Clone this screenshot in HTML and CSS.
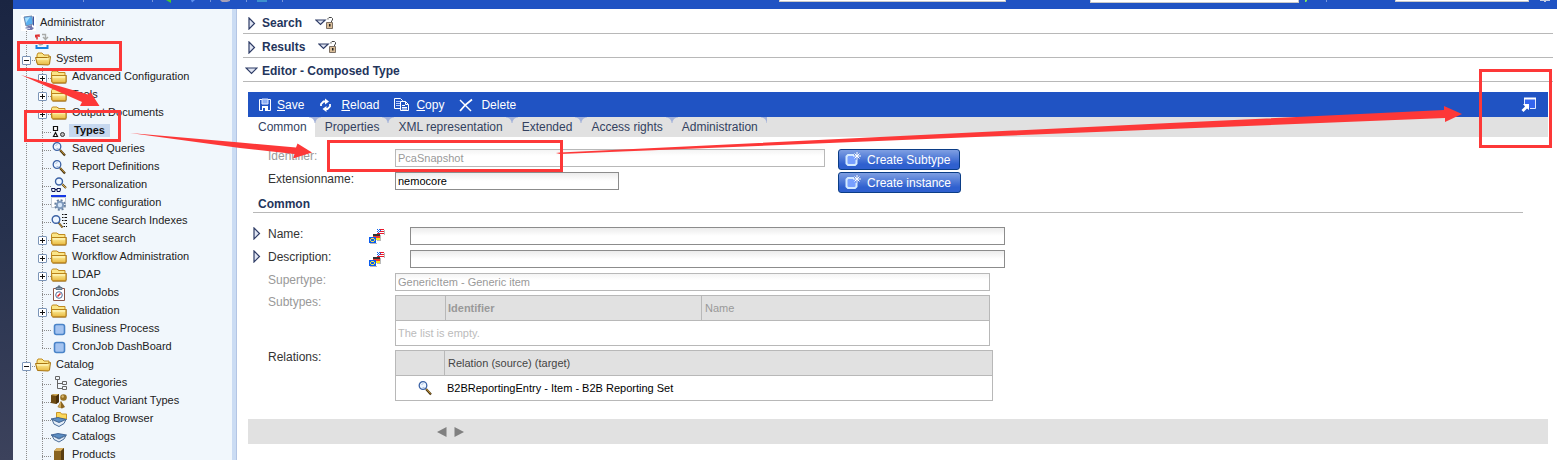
FILE: index.html
```html
<!DOCTYPE html>
<html lang="en">
<head>
<meta charset="utf-8">
<title>Editor - Composed Type</title>
<link rel="stylesheet" href="styles.css">
</head>
<body>
<svg class="defs" aria-hidden="true">
  <linearGradient id="gold" x1="0" y1="0" x2="0" y2="1"><stop offset="0" stop-color="#fff3a0"/><stop offset="1" stop-color="#e8b840"/></linearGradient>
  <symbol id="folder" viewBox="0 0 16 16">
    <path d="M1 13V4l1-2h5l2 2h5v2h2v7l-1 2H2z" fill="#8a5d10" opacity=".55"/>
    <path d="M.5 12.500V3.500l1-1.500h4.500l1.500 1.500h6.500v9.500z" fill="#fbe688" stroke="#c08a20"/>
    <path d="M1 13.500l-.5-7h14.500V13l-1 .8H1.500z" fill="url(#gold)" stroke="#b98218"/>
    <path d="M2 8h12" stroke="#fff8c8"/>
  </symbol>
  <symbol id="folder-open" viewBox="0 0 16 16">
    <path d="M2 12V4l1-2h4l2 2h5v8z" fill="#fbe688" stroke="#c08a20"/>
    <path d="M2.500 13.500L.5 6.500h12l3-1-1 7.500-1 1z" fill="url(#gold)" stroke="#a87410"/>
    <path d="M2 8h11" stroke="#fff8c8"/>
  </symbol>
  <symbol id="lens" viewBox="0 0 16 16">
    <path d="M9 9l5 5.500" stroke="#4a3510" stroke-width="2.200"/>
    <path d="M9 8.500l4.500 5" stroke="#c89838"/>
    <circle cx="6" cy="5.500" r="3.800" fill="#eef6ff" stroke="#3b62a5" stroke-width="1.300"/>
    <path d="M4.500 4.500l2-1M5.500 7.500h2" stroke="#a8bede"/>
  </symbol>
  <symbol id="square" viewBox="0 0 16 16"><rect x="3.500" y="3.500" width="10" height="10" rx="2" fill="#a5c4f0" stroke="#4a84c8" stroke-width="1.600"/></symbol>
  <symbol id="computer" viewBox="0 0 16 16">
    <path d="M0 0h15v16H0z" fill="#fff"/>
    <path d="M3 2l8-1 1 8-7 2z" fill="#5ab0f0" stroke="#6f87ad"/>
    <path d="M4 3l5-1-4 6z" fill="#a9e0ff"/><path d="M12 1l1 1v8l-1 1z" fill="#3d55a0"/>
    <path d="M7 11l4-1v2l2 1-2 2H7l-3-2z" fill="#7178ad"/><path d="M4 13l5 .5" stroke="#d7dcf0"/>
  </symbol>
  <symbol id="inbox" viewBox="0 0 16 16">
    <path d="M2 6.500V3M.5 4.500V2.500L4 2v2" fill="none" stroke="#d33" stroke-width="1.500"/>
    <path d="M7 1.500h3.500v4M13 4l-2.500 2.500L8 4M3 10l2 2 3-1M12 8v3" fill="none" stroke="#a8aaa8" stroke-width="1.400"/>
    <path d="M1.500 12v3h11v-3" fill="none" stroke="#1982e0" stroke-width="2"/>
  </symbol>
  <symbol id="types" viewBox="0 0 16 16">
    <path d="M2.500 3.500h4v4h-4zM4.500 9.500l2 4h-4z" fill="#fff" stroke="#111" stroke-width="1.200"/><circle cx="11.500" cy="11.500" r="2" fill="#bbb" stroke="#333"/>
  </symbol>
  <symbol id="person" viewBox="0 0 16 16">
    <path d="M11 7l4 4" stroke="#5a4010" stroke-width="2"/><path d="M11 7l4 4" stroke="#dcb050"/>
    <circle cx="8" cy="4.500" r="3.500" fill="#eef6ff" stroke="#3b62a5" stroke-width="1.400"/>
    <path d="M.5 11.500h3.500v3h-3zM6 11.500h3.500l-.5 3H6zM4 12.500h2" fill="none" stroke="#0d1550"/>
  </symbol>
  <symbol id="hmc" viewBox="0 0 16 16">
    <path d="M.5 2.500h14v10H.5z" fill="#fff" stroke="#c5ccd6"/><path d="M0 0h15v2H0z" fill="#1538e6"/>
    <circle cx="9" cy="10" r="4.800" fill="none" stroke="#68809f" stroke-width="2" stroke-dasharray="2 1.770"/>
    <circle cx="9" cy="10" r="3.200" fill="#d6e6f8" stroke="#7f9abc" stroke-width="2"/>
  </symbol>
  <symbol id="lucene" viewBox="0 0 16 16">
    <path d="M7.500 9.500l4 5" stroke="#4a3510" stroke-width="2"/><path d="M7.500 9.500l4 5" stroke="#d0a040"/>
    <circle cx="5" cy="6.500" r="3.800" fill="#eef6ff" stroke="#3b62a5" stroke-width="1.400"/>
    <path d="M11 1.500h5M11 4.500h5M11 7.500h5M12.500 10.500h3.500M12.500 13.500h3.500" stroke="#111" stroke-dasharray="1.500 1 4 0"/>
  </symbol>
  <symbol id="clip" viewBox="0 0 16 16">
    <path d="M2.500 3.500h11v12h-11z" fill="#fff" stroke="#8c5548"/><path d="M5 2.500h6v2H5zM7 1h2v1H7z" fill="#8ca3b8" stroke="#5e7183"/>
    <circle cx="8" cy="10" r="3.300" fill="#fff" stroke="#4d6b98"/><path d="M6.500 11.500l3-3" stroke="#d22" stroke-width="1.500"/>
  </symbol>
  <symbol id="categories" viewBox="0 0 16 16">
    <path d="M4.500 1.500h4v3h-4zM11.500 6.500h4v3h-4zM11.500 11.500h4v3h-4zM6.500 5v8.500h5M6.500 8.500h5" fill="none" stroke="#666"/>
  </symbol>
  <symbol id="variants" viewBox="0 0 16 16">
    <path d="M0 2l3-1h5v8l-3 2-5-1z" fill="#6d4b12"/><path d="M0 2l3-1h5L6 3z" fill="#d0aa58"/><path d="M5 3l3-2v8l-3 2z" fill="#4a300a"/>
    <circle cx="12.500" cy="4.500" r="3.300" fill="#987224"/><circle cx="11.700" cy="3.500" r="1.200" fill="#d8b870"/>
    <path d="M10 8l4 6-3 1.500L6.500 14z" fill="#8a6420"/><path d="M10 8l0 7-3-1z" fill="#d0aa58"/>
  </symbol>
  <symbol id="browser" viewBox="0 0 16 16">
    <path d="M5.500 8V1.500h4l1 1.500h5v5z" fill="#fbd75a" stroke="#c9962a"/>
    <path d="M0 8l7-1.500 8.500 2-7.500 3z" fill="#5d8fc4" stroke="#2c5288" stroke-width=".8"/><path d="M1 8.500l2 4.500 5 2.500 5-3 2-4-7 3z" fill="#e4edf7" stroke="#4a6d98"/>
  </symbol>
  <symbol id="catalog" viewBox="0 0 16 16">
    <path d="M0 6l7-1.500L15.500 6 8 9.500z" fill="#5d8fc4" stroke="#2c5288" stroke-width=".8"/><path d="M1 6.500l2 4 5 2.500 5-3 2-3.500-7 3.500z" fill="#e4edf7" stroke="#4a6d98"/>
  </symbol>
  <symbol id="box" viewBox="0 0 16 16"><path d="M3 4l3-3h7v12l-3 3H3z" fill="#8a6420"/><path d="M3 4l3-3h7l-3 3z" fill="#d8b060"/><path d="M10 4l3-3v12l-3 3z" fill="#5a3e10"/></symbol>
  <symbol id="tri-right" viewBox="0 0 8 13"><path d="M1 1l5.500 5.500L1 12z" fill="#dfe4f2" stroke="#2e3c66" stroke-width="1.200"/></symbol>
  <symbol id="tri-down" viewBox="0 0 13 8"><path d="M1 1h11L6.500 6.500z" fill="#dfe4f2" stroke="#2e3c66" stroke-width="1.200"/></symbol>
  <symbol id="unlock" viewBox="0 0 19 12">
    <path d="M.8 3h9.400L5.500 7.500z" fill="#dfe4f2" stroke="#2e3c66" stroke-width="1.200"/>
    <path d="M13 2.500V1.500l1-1h2.500l1 1V3l-1 1v1.500" fill="none" stroke="#444"/><path d="M11.500 5.500h6v6h-6z" fill="#d9bd98" stroke="#7d7064"/><path d="M14 7h1.500v2.500H14z" fill="#222"/>
  </symbol>
  <symbol id="flags" viewBox="0 0 16 16" shape-rendering="crispEdges">
    <path d="M8 0h7v6H8z" fill="#fff"/><path d="M11 0h4v1h-4zM11 2h4v1h-4zM8 4h7v1H8z" fill="#e8182c"/>
    <path d="M8 0h1v1H8zM10 0h1v1h-1zM9 1h1v1H9zM11 1h1v1h-1zM8 2h1v1H8zM10 2h1v1h-1zM9 3h1v1H9z" fill="#1767e8"/><path d="M15 1h1v5h-1z" fill="#bbb"/>
    <path d="M4 5h7v2H4z" fill="#333"/><path d="M4 7h7v2H4z" fill="#f03a30"/><path d="M4 9h7v2H4z" fill="#f8e420"/><path d="M11 6h1v6H8v-1h3z" fill="#bbb"/>
    <path d="M0 8h7v6H0z" fill="#0a5cf0"/><path d="M2 9h3v1H2zM1 10h1v2H1zM5 10h1v2H5zM2 12h3v1H2z" fill="#f0e540"/><path d="M1 14h7v1H1z" fill="#bbb"/>
  </symbol>
  <symbol id="new" viewBox="0 0 16 16">
    <path d="M9 3H3L1.500 4.500v7L3 13h7l1.500-1.500V8" fill="#78a0ff" stroke="#d4eaff" stroke-width="2"/>
    <path d="M12 0v8M8 4h8M9.500 1.500l5 5M14.500 1.500l-5 5" stroke="#fff"/>
  </symbol>
</svg>

<div class="app">
  <div class="desktop"></div>
  <div class="window">
    <header class="topbar">
      <svg width="287" height="4" viewBox="13 0 287 4" aria-hidden="true">
        <path d="M83.500 0v2M152.500 0v2M210.500 0v2M246.500 0v2M282.500 0v2" stroke="#7494dc"/>
        <path d="M166 0h5v3z" fill="#48c82c"/><path d="M191 0h4l-3 2.500z" fill="#5d90f0"/>
        <path d="M220 0h10v1l-3 1h-5z" fill="#a6a0b8"/><path d="M257 0h10v2h-10z" fill="#3c8fce"/>
      </svg>
      <div class="top-fields">
        <input class="top-input one" type="text" aria-label="Search">
        <input class="top-input two" type="text" aria-label="Type">
        <svg width="96" height="4" viewBox="0 0 96 4" aria-hidden="true"><path d="M6 0h2v1l-1 1H6z" fill="#7ce85c"/><path d="M27.500 0v2" stroke="#7494dc"/></svg>
        <input class="top-input three" type="text" aria-label="Filter">
        <svg width="28" height="4" viewBox="0 0 28 4" aria-hidden="true"><path d="M11 0h10v1h-4v1h-2V1h-4z" fill="#c3cde4"/></svg>
      </div>
    </header>
    <div class="panes">
      <nav class="tree" aria-label="Navigation">
        <div class="row root"><svg class="icon"><use href="#computer"/></svg><a href="#">Administrator</a></div>
        <div class="row l1 leaf"><svg class="icon"><use href="#inbox"/></svg><a href="#">Inbox</a></div>
        <div class="row l1"><button class="toggle open" aria-label="Collapse System"></button><svg class="icon"><use href="#folder-open"/></svg><a href="#">System</a></div>
        <div class="row l2"><button class="toggle" aria-label="Expand Advanced Configuration"></button><svg class="icon"><use href="#folder"/></svg><a href="#">Advanced Configuration</a></div>
        <div class="row l2"><button class="toggle" aria-label="Expand Tools"></button><svg class="icon"><use href="#folder"/></svg><a href="#">Tools</a></div>
        <div class="row l2"><button class="toggle" aria-label="Expand Output Documents"></button><svg class="icon"><use href="#folder"/></svg><a href="#">Output Documents</a></div>
        <div class="row l2 leaf"><svg class="icon"><use href="#types"/></svg><a class="selected" href="#">Types</a></div>
        <div class="row l2 leaf"><svg class="icon"><use href="#lens"/></svg><a href="#">Saved Queries</a></div>
        <div class="row l2 leaf"><svg class="icon"><use href="#lens"/></svg><a href="#">Report Definitions</a></div>
        <div class="row l2 leaf"><svg class="icon"><use href="#person"/></svg><a href="#">Personalization</a></div>
        <div class="row l2 leaf"><svg class="icon"><use href="#hmc"/></svg><a href="#">hMC configuration</a></div>
        <div class="row l2 leaf"><svg class="icon"><use href="#lucene"/></svg><a href="#">Lucene Search Indexes</a></div>
        <div class="row l2"><button class="toggle" aria-label="Expand Facet search"></button><svg class="icon"><use href="#folder"/></svg><a href="#">Facet search</a></div>
        <div class="row l2"><button class="toggle" aria-label="Expand Workflow Administration"></button><svg class="icon"><use href="#folder"/></svg><a href="#">Workflow Administration</a></div>
        <div class="row l2"><button class="toggle" aria-label="Expand LDAP"></button><svg class="icon"><use href="#folder"/></svg><a href="#">LDAP</a></div>
        <div class="row l2 leaf"><svg class="icon"><use href="#clip"/></svg><a href="#">CronJobs</a></div>
        <div class="row l2"><button class="toggle" aria-label="Expand Validation"></button><svg class="icon"><use href="#folder"/></svg><a href="#">Validation</a></div>
        <div class="row l2 leaf"><svg class="icon"><use href="#square"/></svg><a href="#">Business Process</a></div>
        <div class="row l2 leaf last"><svg class="icon"><use href="#square"/></svg><a href="#">CronJob DashBoard</a></div>
        <div class="row l1"><button class="toggle open" aria-label="Collapse Catalog"></button><svg class="icon"><use href="#folder-open"/></svg><a href="#">Catalog</a></div>
        <div class="row l2 leaf"><svg class="icon"><use href="#categories"/></svg><a class="wide" href="#">Categories</a></div>
        <div class="row l2 leaf"><svg class="icon"><use href="#variants"/></svg><a href="#">Product Variant Types</a></div>
        <div class="row l2 leaf"><svg class="icon"><use href="#browser"/></svg><a href="#">Catalog Browser</a></div>
        <div class="row l2 leaf"><svg class="icon"><use href="#catalog"/></svg><a href="#">Catalogs</a></div>
        <div class="row l2 leaf"><svg class="icon"><use href="#box"/></svg><a href="#">Products</a></div>
      </nav>

      <main class="main">
        <h2 class="section"><button class="fold" aria-label="Expand Search"><svg width="8" height="13"><use href="#tri-right"/></svg></button>Search<button class="lock" aria-label="Search options"><svg width="19" height="12"><use href="#unlock"/></svg></button></h2>
        <h2 class="section"><button class="fold" aria-label="Expand Results"><svg width="8" height="13"><use href="#tri-right"/></svg></button>Results<button class="lock" aria-label="Results options"><svg width="19" height="12"><use href="#unlock"/></svg></button></h2>
        <h2 class="section"><button class="fold down" aria-label="Collapse Editor"><svg width="13" height="8"><use href="#tri-down"/></svg></button>Editor - Composed Type</h2>

        <div class="editor">
          <div class="toolbar">
            <button><svg class="icon" viewBox="0 0 16 16"><path d="M4.500 2.500h11v11h-11z" fill="#2053c3" stroke="#fff"/><path d="M7 2h6v5H7z" fill="#8fb0f5" stroke="#dfe8ff"/><path d="M7 9h6v5H7z" fill="#fff"/><path d="M8 11h2v3H8z" fill="#2053c3"/></svg><span><u>S</u>ave</span></button>
            <button><svg class="icon" viewBox="0 0 16 16"><path d="M2 9V7l2.500-2.500H6M11 7v2.500L8.500 12H7" fill="none" stroke="#fff" stroke-width="1.800"/><path d="M6 1.500l4 3L6 7.500zM7.500 9l-4 3 4 3z" fill="#fff"/></svg><span><u>R</u>eload</span></button>
            <button><svg class="icon" viewBox="0 0 16 16"><path d="M.5 1.500h6l2 2v8h-8z" fill="#2053c3" stroke="#fff"/><path d="M2 4.500h4M2 6.500h4M2 8.500h4" stroke="#b9ccff"/><path d="M6.500 4.500h5l3 3v6h-8z" fill="#2053c3" stroke="#fff"/><path d="M11.500 4.500v3h3M8 8.500h3M8 10.500h5M8 12h5" fill="none" stroke="#fff"/></svg><span><u>C</u>opy</span></button>
            <button><svg class="icon" viewBox="0 0 16 16"><path d="M1 3l11 11" stroke="#fff" stroke-width="1.400"/><path d="M13 2.500C8 6 4 10 1 14" fill="none" stroke="#fff" stroke-width="1.800"/></svg><span>Delete</span></button>
            <button class="popout" aria-label="Open in new window"><svg class="icon" viewBox="0 0 16 16"><path d="M3.500 7V1.500h11v10H9" fill="#3465ee" stroke="#dfe8ff"/><path d="M3 1.500h12" stroke="#fff" stroke-width="2"/><path d="M2 7h6v6l-2-1.500-3.500 3.500-2-2L4 9.500z" fill="#fff"/></svg></button>
          </div>
          <div class="tabs" role="tablist">
            <button role="tab" class="tab active" aria-selected="true">Common</button>
            <button role="tab" class="tab">Properties</button>
            <button role="tab" class="tab">XML representation</button>
            <button role="tab" class="tab">Extended</button>
            <button role="tab" class="tab">Access rights</button>
            <button role="tab" class="tab">Administration</button>
          </div>

          <div class="form">
            <div class="field with-button disabled">
              <label for="identifier">Identifier:</label>
              <div class="cell"><input id="identifier" class="w-medium" type="text" value="PcaSnapshot" disabled></div>
              <button class="create"><svg class="icon"><use href="#new"/></svg>Create Subtype</button>
            </div>
            <div class="field with-button">
              <label for="extension">Extensionname:</label>
              <div class="cell"><input id="extension" class="w-small" type="text" value="nemocore"></div>
              <button class="create"><svg class="icon"><use href="#new"/></svg>Create instance</button>
            </div>
            <h3 class="group">Common</h3>
            <div class="field">
              <button class="fold" aria-label="Expand Name"><svg width="8" height="13"><use href="#tri-right"/></svg></button>
              <label for="name">Name:</label><svg class="icon flag"><use href="#flags"/></svg><input id="name" class="w-large" type="text">
            </div>
            <div class="field">
              <button class="fold" aria-label="Expand Description"><svg width="8" height="13"><use href="#tri-right"/></svg></button>
              <label for="description">Description:</label><svg class="icon flag"><use href="#flags"/></svg><input id="description" class="w-large" type="text">
            </div>
            <div class="field disabled">
              <label for="supertype">Supertype:</label>
              <input id="supertype" class="w-large" type="text" value="GenericItem - Generic item" disabled>
            </div>
            <div class="field disabled tight">
              <span class="label" id="subtypes">Subtypes:</span>
              <table class="grid subtypes" aria-labelledby="subtypes">
                <thead><tr><th class="mark"></th><th class="ident">Identifier</th><th class="plain">Name</th></tr></thead>
                <tbody><tr><td class="empty" colspan="3">The list is empty.</td></tr></tbody>
              </table>
            </div>
            <div class="field tight">
              <span class="label" id="relations">Relations:</span>
              <table class="grid relations" aria-labelledby="relations">
                <thead><tr><th class="mark"></th><th class="plain">Relation (source) (target)</th></tr></thead>
                <tbody><tr><td class="mark"><svg class="icon"><use href="#lens"/></svg></td><td>B2BReportingEntry - Item - B2B Reporting Set</td></tr></tbody>
              </table>
            </div>
          </div>

          <div class="pager">
            <button aria-label="Previous"><svg width="10" height="10" viewBox="0 0 10 10"><path d="M9.500 0v10L0 5z" fill="#808080"/></svg></button>
            <button aria-label="Next"><svg width="10" height="10" viewBox="0 0 10 10"><path d="M.5 0v10L10 5z" fill="#808080"/></svg></button>
          </div>
        </div>
      </main>
    </div>
  </div>

  <svg class="marks" width="1557" height="460" viewBox="0 0 1557 460" aria-hidden="true">
    <g fill="none" stroke="#fd3838" stroke-width="3">
      <rect x="18.500" y="42.500" width="102" height="27"/>
      <rect x="25.500" y="111.500" width="94" height="29"/>
      <rect x="328.500" y="141.500" width="233" height="29"/>
      <rect x="1480.500" y="70.500" width="70" height="76"/>
    </g>
    <g fill="#fd3838">
      <path d="M21 75l67 19.500 2.500-2.500 9 14H80l2-4z"/>
      <path d="M130 133l110 9.500 56 5 1.500-4L312 152.500l-19 6 1.500-4.500L240 148z"/>
      <path d="M556 153l4-.5L1170 123l274-13v-4l18 8-17 8v-4l-275 11-610 25z"/>
    </g>
  </svg>
</div>
</body>
</html>
```
FILE: styles.css
```css
* { box-sizing: border-box; }

body {
  margin: 0;
  background: #fff;
  color: #333;
  font: 12px/14px "Liberation Sans", Arial, sans-serif;
}

button {
  margin: 0;
  padding: 0;
  border: 0;
  background: none;
  color: inherit;
  font: inherit;
}

svg { display: block; flex: none; }
.defs { position: absolute; width: 0; height: 0; }
.icon { width: 16px; height: 16px; }

.app {
  position: relative;
  display: flex;
  height: 100vh;
  overflow: hidden;
}

.desktop {
  flex: none;
  width: 13px;
  background: linear-gradient(#1a2542, #26314d 50%, #3c425c);
}

.window {
  flex: 1;
  min-width: 0;
  display: flex;
  flex-direction: column;
}

/* Top bar */
.topbar {
  display: flex;
  justify-content: space-between;
  align-items: flex-start;
  flex: none;
  height: 9px;
  background: #2053c3;
}
.top-fields { display: flex; align-items: flex-start; }
.top-input {
  height: 2px;
  padding: 0;
  border: 1px solid #c9c9c9;
  border-top: 0;
  background: #fff;
}
.one { width: 227px; margin-right: 84px; }
.two { width: 209px; height: 3px; }
.three { width: 134px; }

.panes { flex: 1; display: flex; min-height: 0; }

/* Navigation tree */
.tree {
  flex: none;
  width: 224px;
  padding-top: 4px;
  overflow: hidden;
  background: #f1f7fc;
  border-right: 1px solid #b3c5e4;
  box-shadow: inset -4px 0 #cbdcf3;
}
.row {
  --dots-v: repeating-linear-gradient(to bottom, #8c8c8c 0 1px, transparent 1px 2px);
  --dots-h: repeating-linear-gradient(to right, #8c8c8c 0 1px, transparent 1px 2px);
  display: flex;
  align-items: flex-end;
  height: 18px;
  font-size: 11px;
  line-height: 18px;
}
.row a {
  padding: 0 3px;
  margin-left: 2px;
  color: #222;
  text-decoration: none;
  white-space: nowrap;
}
.row .selected {
  align-self: center;
  padding: 0 5px;
  background: #c6d8ef;
  color: #111;
  font-weight: bold;
  line-height: 13px;
}
.row .wide { padding-left: 5px; }
.root { padding-left: 8px; }
.root a { margin-left: 0; }
.l1 {
  padding-left: 9px;
  background: var(--dots-v) 13px 0 / 1px 100% no-repeat, var(--dots-h) 13px 11px / 9px 1px no-repeat;
}
.l2 {
  padding-left: 25px;
  background:
    var(--dots-v) 13px 0 / 1px 100% no-repeat,
    var(--dots-v) 29px 0 / 1px 100% no-repeat,
    var(--dots-h) 29px 11px / 9px 1px no-repeat;
}
.l2.last {
  background:
    var(--dots-v) 13px 0 / 1px 100% no-repeat,
    var(--dots-v) 29px 0 / 1px 12px no-repeat,
    var(--dots-h) 29px 11px / 9px 1px no-repeat;
}
.leaf.l1 { padding-left: 22px; }
.leaf.l2 { padding-left: 38px; }

.toggle {
  flex: none;
  width: 9px;
  height: 9px;
  margin: 0 4px 2px 0;
  border: 1px solid #7b95b8;
  border-radius: 1px;
  background:
    linear-gradient(#111, #111) 1px 3px / 5px 1px no-repeat,
    linear-gradient(#111, #111) 3px 1px / 1px 5px no-repeat,
    #fff;
}
.toggle.open { background: linear-gradient(#111, #111) 1px 3px / 5px 1px no-repeat, #fff; }

/* Work area */
.main { flex: 1; min-width: 0; padding: 1px 4px 0 6px; overflow: hidden; }

.section {
  display: flex;
  align-items: center;
  height: 24px;
  margin: 0;
  padding-top: 3px;
  border-bottom: 1px solid #b8b8b8;
  color: #24355c;
  font-size: 12px;
}
.fold { flex: none; width: 15px; }
.section .fold { width: 19px; padding-left: 5px; }
.section .fold.down { padding-left: 2px; }
.section .lock { margin-left: 13px; }

.editor { margin: 10px 5px 0; }

.toolbar {
  display: flex;
  align-items: center;
  gap: 15px;
  height: 25px;
  padding: 0 11px 0 7px;
  background: #2053c3;
  color: #fff;
}
.toolbar button { display: flex; align-items: center; gap: 6px; }
.toolbar .popout { margin-left: auto; }

.tabs { display: flex; height: 20px; background: #e1e1e1; }
.tab {
  position: relative;
  padding: 0 9px;
  background: #e1e1e1;
  color: #33415f;
}
.tab::after {
  content: "";
  position: absolute;
  top: 0;
  right: -6px;
  z-index: 1;
  width: 12px;
  height: 6px;
  background:
    radial-gradient(circle at 0 6px, transparent 5px, #a3b2da 6px) 0 0 / 6px 6px no-repeat,
    radial-gradient(circle at 6px 6px, transparent 5px, #a3b2da 6px) 6px 0 / 6px 6px no-repeat;
}
.tab:last-child::after { right: 0; width: 6px; }
.tab + .tab { padding-left: 10px; }
.tab.active { padding: 0 8px 0 10px; background: #fff; }

/* Form */
.form { padding: 12px 0 0 5px; }
.field {
  display: flex;
  align-items: flex-start;
  margin-bottom: 5px;
}
.field.with-button { margin-bottom: 2px; }
.field.tight { margin: -1px 0 4px; }
.field label, .field .label { flex: none; width: 127px; }
.field > label:first-child, .field > .label:first-child { width: 142px; padding-left: 15px; }
.field > .fold + label { width: 101px; }
.field .flag { margin: 2px 25px 0 0; }
.field.tight + .tight { margin-top: 0; }
.disabled { color: #999; }

.field input {
  height: 18px;
  padding: 0 2px;
  border: 1px solid #8c8c8c;
  background: linear-gradient(#ececec, #fff 8px);
  color: #000;
  font: 11px/14px "Liberation Sans", Arial, sans-serif;
}
.field input:disabled { border-color: #b8b8b8; background: linear-gradient(#f4f4f4, #fff 6px); color: #999; }
.cell { width: 430px; margin-right: 13px; }
.w-small { width: 224px; }
.w-medium { width: 430px; }
.w-large { width: 595px; }

.create {
  display: flex;
  align-items: center;
  gap: 6px;
  height: 21px;
  padding: 0 9px 0 6px;
  border: 1px solid #0b3d86;
  border-radius: 3px;
  background: linear-gradient(#7f9fe2, #2f60cf 75%);
  color: #fff;
}

.group {
  height: 18px;
  margin: 0 25px 14px 0;
  padding: 2px 5px 0;
  border-bottom: 1px solid #b8b8b8;
  color: #24355c;
  font-size: 12px;
}

.grid { border-collapse: collapse; table-layout: fixed; font-size: 11px; }
.subtypes { width: 595px; }
.relations { width: 598px; color: #000; }
.grid th, .grid td { height: 25px; padding: 0 2px; border: 1px solid #b8b8b8; text-align: left; }
.grid th { background: #e1e1e1; }
.grid .plain { color: #444; font-weight: normal; padding-left: 3px; }
.disabled .grid .plain { color: #999; }
.grid .mark { width: 50px; }
.grid td.mark { padding-left: 21px; border-right-color: transparent; }
.grid .ident { width: 256px; }
.grid .empty { color: #bbb; }
.relations .mark { width: 49px; }

.pager {
  display: flex;
  align-items: center;
  gap: 7px;
  height: 25px;
  margin-top: 18px;
  padding-left: 189px;
  background: #e1e1e1;
}

/* Callouts drawn over the page */
.marks { position: absolute; top: 0; left: 0; pointer-events: none; }
```
